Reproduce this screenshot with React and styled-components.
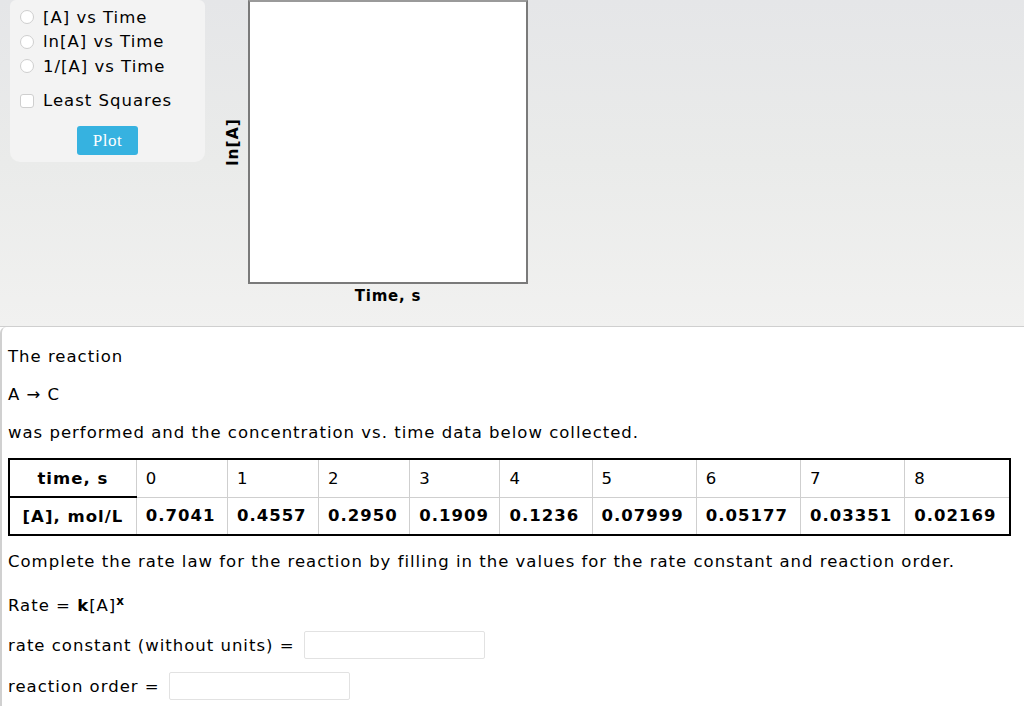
import React from 'react';
import styled, { createGlobalStyle } from 'styled-components';

const GlobalStyle = createGlobalStyle`
  html, body {
    margin: 0;
    padding: 0;
    background: #ffffff;
  }
  body {
    font-family: 'DejaVu Sans', Verdana, sans-serif;
    font-size: 16.5px;
    letter-spacing: 1px;
    color: #000;
  }
`;

const TopArea = styled.div`
  display: flex;
  align-items: flex-start;
  height: 326px;
  padding-left: 10px;
  background: linear-gradient(to bottom, #e5e6e8 0%, #eaebea 50%, #f1f1f0 100%);
  border-bottom: 1px solid #cfcfcf;
`;

const Controls = styled.div`
  width: 195px;
  height: 162px;
  box-sizing: border-box;
  padding: 5px 0 0 10px;
  background: #f3f3f3;
  border-radius: 6px 6px 10px 10px;
`;

const Option = styled.label`
  display: flex;
  align-items: center;
  height: 24.5px;
  font-size: 16.5px;
  margin-top: ${(p) => (p.$gap ? '10px' : '0')};
`;

const RadioMark = styled.span`
  width: 12px;
  height: 12px;
  border: 1px solid #cfcfcf;
  border-radius: ${(p) => (p.$square ? '3px' : '50%')};
  background: #fff;
  margin-right: 9px;
  flex: none;
`;

const ButtonRow = styled.div`
  display: flex;
  padding-left: 57px;
  margin-top: 13px;
`;

const PlotButton = styled.button`
  width: 61px;
  height: 29px;
  border: none;
  border-radius: 3px;
  background: #36b2e0;
  color: #fff;
  font-family: 'Liberation Serif', 'DejaVu Serif', serif;
  font-size: 17px;
  letter-spacing: 0.5px;
  padding: 0;
`;

const Chart = styled.div`
  display: grid;
  grid-template-columns: 24px 280px;
  grid-template-rows: 284px auto;
  margin-left: 19px;
`;

const YLabel = styled.div`
  display: flex;
  align-items: center;
  justify-content: center;
  padding-right: 6px;
  span {
    transform: rotate(-90deg);
    font-weight: bold;
    font-size: 15.5px;
    letter-spacing: 1px;
    white-space: nowrap;
  }
`;

const PlotBox = styled.div`
  background: #fff;
  border: 2px solid #7a7a7a;
  box-sizing: border-box;
  border-top-color: #9a9a9a;
`;

const XLabel = styled.div`
  grid-column: 2;
  text-align: center;
  font-weight: bold;
  font-size: 15px;
  letter-spacing: 0.8px;
  padding-top: 3px;
`;

const Question = styled.div`
  background: #fff;
  border-left: 2px solid #d0d0d0;
  border-top-left-radius: 6px;
  padding: 18px 0 0 6px;
  min-height: calc(100vh - 345px);
`;

const Para = styled.p`
  margin: 0 0 ${(p) => p.$after || 14}px 0;
  line-height: 24px;
`;

const DataTable = styled.table`
  border-collapse: collapse;
  border: 2px solid #000;
  width: 1003px;
  margin: 0 0 14px 0;
  th, td {
    border: 1px solid #cfcfcf;
    height: 38px;
    padding: 0 9px;
    text-align: left;
    box-sizing: border-box;
  }
  th {
    text-align: center;
    font-weight: bold;
    border-bottom: 2px solid #000;
  }
  tr:last-child th {
    border-bottom: none;
  }
  tr:last-child td {
    font-weight: bold;
  }
`;

const Col = styled.col`
  width: ${(p) => p.$w}px;
`;

const Sup = styled.sup`
  font-weight: bold;
  font-size: 12px;
  vertical-align: 6px;
  line-height: 0;
`;

const AnswerRow = styled.div`
  display: flex;
  align-items: center;
  height: 28px;
  margin-bottom: 13px;
`;

const AnswerInput = styled.input`
  width: 181px;
  height: 28px;
  box-sizing: border-box;
  margin-left: 9px;
  border: 1px solid #e2e2e2;
  border-radius: 2px;
`;

const times = ['0', '1', '2', '3', '4', '5', '6', '7', '8'];
const concs = ['0.7041', '0.4557', '0.2950', '0.1909', '0.1236', '0.07999', '0.05177', '0.03351', '0.02169'];
const widths = [127, 91, 91, 91, 90, 92, 104, 104, 104, 105];

export default function App() {
  return (
    <>
      <GlobalStyle />
      <TopArea>
        <Controls>
          <Option><RadioMark />[A] vs Time</Option>
          <Option><RadioMark />ln[A] vs Time</Option>
          <Option><RadioMark />1/[A] vs Time</Option>
          <Option $gap><RadioMark $square />Least Squares</Option>
          <ButtonRow>
            <PlotButton>Plot</PlotButton>
          </ButtonRow>
        </Controls>
        <Chart>
          <YLabel><span>ln[A]</span></YLabel>
          <PlotBox />
          <XLabel>Time, s</XLabel>
        </Chart>
      </TopArea>
      <Question>
        <Para>The reaction</Para>
        <Para>A → C</Para>
        <Para $after={13}>was performed and the concentration vs. time data below collected.</Para>
        <DataTable>
          <colgroup>
            {widths.map((w, i) => <Col key={i} $w={w} />)}
          </colgroup>
          <tbody>
            <tr>
              <th>time, s</th>
              {times.map((t) => <td key={t}>{t}</td>)}
            </tr>
            <tr>
              <th>[A], mol/L</th>
              {concs.map((c) => <td key={c}>{c}</td>)}
            </tr>
          </tbody>
        </DataTable>
        <Para $after={20}>Complete the rate law for the reaction by filling in the values for the rate constant and reaction order.</Para>
        <Para $after={13}>Rate = <b>k</b>[A]<Sup>x</Sup></Para>
        <AnswerRow>rate constant (without units) = <AnswerInput /></AnswerRow>
        <AnswerRow>reaction order = <AnswerInput /></AnswerRow>
      </Question>
    </>
  );
}
